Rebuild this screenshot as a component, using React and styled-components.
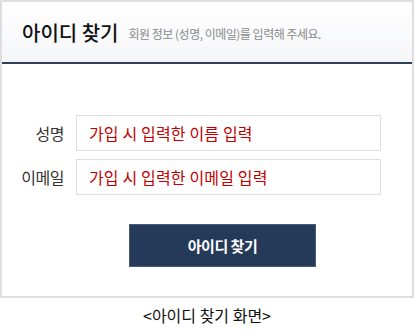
import styled, { createGlobalStyle } from "styled-components";

const GlobalStyle = createGlobalStyle`
  body {
    margin: 0;
    background: #fff;
    font-family: "Noto Sans CJK KR", "Noto Sans", sans-serif;
  }
`;

const Frame = styled.div`
  width: 410px;
  border: 2px solid #dedede;
  background: #fff;
`;

const Header = styled.div`
  display: flex;
  align-items: center;
  gap: 10px;
  height: 60px;
  padding-left: 20px;
  background: linear-gradient(#ffffff, #f5f6f9);
  border-bottom: 2px solid #2e3f5c;
`;

const Title = styled.h1`
  margin: 0;
  font-size: 20px;
  font-weight: 500;
  color: #111;
`;

const Subtitle = styled.span`
  font-size: 12px;
  color: #8a8a8a;
  letter-spacing: -0.5px;
  padding-top: 3px;
`;

const Form = styled.form`
  display: flex;
  flex-direction: column;
  gap: 8px;
  padding: 51px 0 0 16px;
`;

const Row = styled.div`
  display: flex;
  align-items: center;
  gap: 12px;
`;

const Label = styled.label`
  width: 46px;
  text-align: right;
  font-size: 16px;
  color: #333;
  letter-spacing: -0.5px;
`;

const Input = styled.input`
  box-sizing: border-box;
  width: 305px;
  height: 36px;
  padding: 0 12px;
  border: 1px solid #dcdfe6;
  font-family: inherit;
  font-size: 16px;
  letter-spacing: 0.15px;
  outline: none;

  &::placeholder {
    color: #c00000;
  }
`;

const Actions = styled.div`
  display: flex;
  padding: 29px 0 29px 127px;
`;

const Button = styled.button`
  width: 187px;
  height: 43px;
  border: 1px solid #4a5a74;
  background: #253a59;
  color: #fff;
  font-family: inherit;
  font-size: 15px;
  font-weight: 700;
  letter-spacing: -0.5px;
  cursor: pointer;
`;

const Caption = styled.p`
  width: 414px;
  margin: 0;
  text-align: center;
  font-size: 16px;
  line-height: 34px;
  color: #111;
`;

const App = () => {
  return (
    <>
      <GlobalStyle />
      <Frame>
        <Header>
          <Title>아이디 찾기</Title>
          <Subtitle>회원 정보 (성명, 이메일)를 입력해 주세요.</Subtitle>
        </Header>
        <Form onSubmit={(e) => e.preventDefault()}>
          <Row>
            <Label htmlFor="name">성명</Label>
            <Input id="name" placeholder="가입 시 입력한 이름 입력" />
          </Row>
          <Row>
            <Label htmlFor="email">이메일</Label>
            <Input id="email" placeholder="가입 시 입력한 이메일 입력" />
          </Row>
        </Form>
        <Actions>
          <Button type="button">아이디 찾기</Button>
        </Actions>
      </Frame>
      <Caption>&lt;아이디 찾기 화면&gt;</Caption>
    </>
  );
};

export default App;
